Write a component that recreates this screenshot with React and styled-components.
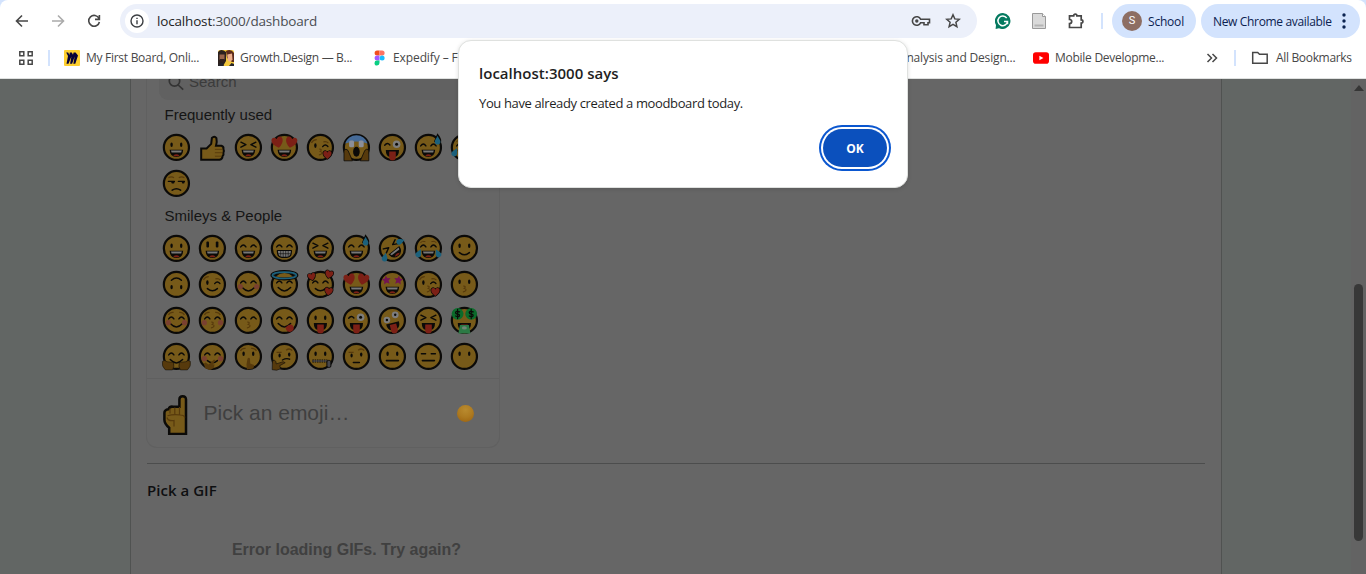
import React from "react";
import styled, { createGlobalStyle } from "styled-components";

const INK = "#0b0a08";
const SKIN = "#775a19";
const RED = "#7c2016";
const BLUE = "#1c617c";
const BROWN = "#573a0c";

const GlobalStyle = createGlobalStyle`
  * { box-sizing: border-box; }
  body { margin: 0; overflow: hidden; font-family: "Open Sans", "Noto Sans", sans-serif; }
`;

const Window = styled.div`
  position: relative;
  width: 1366px;
  height: 574px;
  display: flex;
  flex-direction: column;
  overflow: hidden;
  background: #d3e3fd;
`;

/* ---------- browser chrome ---------- */
const Chrome = styled.header`
  height: 79px;
  flex: none;
  background: #fff;
  border-radius: 8px 8px 0 0;
  border-bottom: 1px solid #dfe1e0;
`;
const Toolbar = styled.div`
  height: 42px;
  display: flex;
  align-items: center;
  padding-left: 13px;
`;
const NavButtons = styled.div`
  width: 107px;
  display: flex;
  gap: 18px;
  svg { display: block; }
`;
const Omnibox = styled.div`
  width: 857px;
  height: 34px;
  border-radius: 17px;
  background: #ecf0fa;
  display: flex;
  align-items: center;
  padding: 0 16px 0 5px;
`;
const SiteInfo = styled.div`
  width: 24px;
  height: 24px;
  border-radius: 50%;
  background: #fff;
  display: grid;
  place-items: center;
  margin-right: 8px;
`;
const Url = styled.div`
  flex: 1;
  font-size: 13.5px;
  letter-spacing: ${(p) => p.$spacing};
  color: #4a4d52;
  white-space: nowrap;
  b { font-weight: 400; color: #1f1f1f; }
`;
const OmniActions = styled.div`
  display: flex;
  align-items: center;
  gap: 14px;
`;
const Extensions = styled.div`
  display: flex;
  align-items: center;
  gap: 20px;
  margin-left: 18px;
`;
const Separator = styled.i`
  width: 2px;
  height: 16px;
  flex: none;
  background: #d3e3fd;
  margin: ${(p) => p.$margin};
`;
const Pill = styled.div`
  width: ${(p) => p.$width}px;
  height: 34px;
  border-radius: 17px;
  background: #d3e3fd;
  color: #0b2250;
  display: flex;
  align-items: center;
  padding-left: ${(p) => p.$pad}px;
  margin-right: 5px;
  font-size: 12px;
  letter-spacing: ${(p) => p.$spacing};
  white-space: nowrap;
`;
const Avatar = styled.span`
  width: 20px;
  height: 20px;
  border-radius: 50%;
  background: #8d6e63;
  color: #fff;
  font: 11px/20px Roboto, sans-serif;
  text-align: center;
  margin-right: 6px;
  letter-spacing: 0;
`;
const PillText = styled.span`
  width: ${(p) => p.$width}px;
`;
const Bookmarks = styled.nav`
  height: 32px;
  display: flex;
  align-items: center;
  padding-left: 18px;
`;
const Bookmark = styled.div`
  width: ${(p) => p.$width}px;
  margin-left: ${(p) => p.$left || 0}px;
  display: flex;
  align-items: center;
  gap: ${(p) => p.$gap || 6}px;
  color: #474747;
  font-size: 12px;
  line-height: 16px;
  letter-spacing: ${(p) => p.$spacing};
  white-space: nowrap;
  flex: none;
  svg { flex: none; display: block; }
`;

/* ---------- page ---------- */
const Page = styled.main`
  flex: 1;
  min-height: 0;
  display: flex;
  background: #626664;
  padding-left: 130px;
`;
const Card = styled.section`
  width: 1092px;
  border: solid #505251;
  border-width: 0 1px;
  background: #666;
  padding: 0 16px;
`;
const Picker = styled.div`
  width: 354px;
  height: 369px;
  margin-left: -1px;
  border: solid #606060;
  border-width: 0 1px 1px;
  border-radius: 0 0 11px 11px;
  font-family: "Liberation Sans", Arial, sans-serif;
  display: flex;
  flex-direction: column;
`;
const SearchBox = styled.div`
  height: 21px;
  margin: 0 12px;
  border-radius: 0 0 9px 9px;
  background: #616161;
  color: #3b3b3b;
  display: flex;
  align-items: flex-start;
  padding-left: 9px;
  gap: 5px;
  font-size: 15px;
  overflow: hidden;
  svg { margin-top: -5px; flex: none; }
  span { line-height: 18px; margin-top: -6px; }
`;
const Category = styled.h3`
  margin: 0;
  padding-left: 17.5px;
  height: ${(p) => p.$height}px;
  line-height: ${(p) => p.$height}px;
  font-size: 15px;
  font-weight: 400;
  color: #151515;
`;
const EmojiGrid = styled.div`
  display: grid;
  grid-template-columns: repeat(9, 36px);
  grid-auto-rows: 36px;
  padding-left: 11px;
`;
const EmojiCell = styled.div`
  display: grid;
  place-items: center;
  svg { display: block; overflow: visible; }
`;
const Preview = styled.footer`
  margin-top: auto;
  height: 69px;
  border-top: 1px solid #5f5f5f;
  display: flex;
  align-items: center;
  padding: 0 25px 0 15px;
`;
const PreviewText = styled.span`
  flex: 1;
  margin-left: 13.5px;
  font-size: 21px;
  color: #3f3f3f;
`;
const SkinTone = styled.span`
  width: 17px;
  height: 17px;
  border-radius: 50%;
  background: radial-gradient(circle at 50% 28%, #b98b2f, #ad7a20 50%, #9a5f0c 100%);
`;
const Rule = styled.hr`
  margin: 15px 0 0;
  border: 0;
  height: 1px;
  background: #4c4d4d;
`;
const Heading = styled.h2`
  margin: 15px 0 0;
  font-size: 15px;
  line-height: 22px;
  font-weight: 600;
  letter-spacing: 0.03px;
  color: #0e0f11;
`;
const ErrorText = styled.p`
  width: 399px;
  margin: 38px 0 0;
  text-align: center;
  font: 700 16px/22px "Liberation Sans", Arial, sans-serif;
  letter-spacing: -0.01px;
  color: #404040;
`;
const Scrollbar = styled.aside`
  width: 15px;
  margin-left: auto;
  background: #636363;
  display: flex;
  flex-direction: column;
  align-items: center;
  padding-top: 6px;
`;
const ScrollThumb = styled.div`
  width: 9px;
  height: 257px;
  margin-top: 193px;
  border-radius: 5px;
  background: #383838;
`;

/* ---------- alert ---------- */
const Alert = styled.div`
  position: absolute;
  left: 458px;
  top: 40px;
  width: 450px;
  height: 148px;
  border: 1px solid #dfe1df;
  border-radius: 13px;
  background: #fff;
  padding: 21px 20px 20px;
  display: flex;
  flex-direction: column;
  color: #1f1f1f;
  box-shadow: 0 1px 4px rgba(0, 0, 0, 0.13);
`;
const AlertTitle = styled.div`
  font-size: 15px;
  line-height: 22px;
  font-weight: 600;
  letter-spacing: 0.02px;
`;
const AlertMessage = styled.div`
  margin-top: 9px;
  font-size: 13px;
  line-height: 20px;
  letter-spacing: -0.37px;
`;
const OkButton = styled.button`
  align-self: flex-end;
  width: 64px;
  height: 38px;
  margin-top: auto;
  padding: 0;
  border: 0;
  border-radius: 19px;
  background: #0b50bd;
  box-shadow: 0 0 0 2px #fff, 0 0 0 4px #0b57d0;
  color: #fff;
  font: 700 12px "Open Sans", sans-serif;
`;

/* ---------- emoji drawing ---------- */
const line = { fill: "none", stroke: INK, strokeWidth: 1.4, strokeLinecap: "round", strokeLinejoin: "round" };
const HEART = "M0 3.8 C-5.6 0.3 -4.3 -4.4 -1.5 -3.6 Q-.3 -3.3 0 -2 Q.3 -3.3 1.5 -3.6 C4.3 -4.4 5.6 .3 0 3.8Z";
const STAR = "M0-4.5 1.3-1.5 4.5-1.2 2.1 1 2.8 4.2 0 2.5-2.8 4.2-2.1 1-4.5-1.2-1.3-1.5Z";

const Heart = ({ x, y, s = 1, r = 0, edge }) => (
  <path d={HEART} transform={`translate(${x} ${y}) rotate(${r}) scale(${s})`} fill={RED} stroke={edge ? INK : "none"} strokeWidth="1.4" paintOrder="stroke" />
);
const Drop = ({ x, y, r = 0 }) => (
  <path d="M0-4.5C1-2 2.8-.4 2.8 1.5a2.8 2.8 0 0 1-5.6 0C-2.8-.4-1-2 0-4.5Z" transform={`translate(${x} ${y}) rotate(${r})`} fill={BLUE} />
);

const eyes = {
  dots: <g fill={INK}><ellipse cx="9.2" cy="11.3" rx="1.2" ry="2.2" /><ellipse cx="18.8" cy="11.3" rx="1.2" ry="2.2" /></g>,
  tall: <g fill={INK}><rect x="8" y="7" width="2.6" height="6" rx="1" /><rect x="17.4" y="7" width="2.6" height="6" rx="1" /></g>,
  arcs: <path {...line} d="M6.3 12.5Q9 8.8 11.5 12.5M16.5 12.5Q19 8.8 21.7 12.5" />,
  squint: <path {...line} d="M6.5 8.8l5 2.4-5 2.6M21.5 8.8l-5 2.4 5 2.6" />,
  hearts: <g><Heart x={7.2} y={9} s={1.45} r={-14} /><Heart x={20.8} y={9} s={1.45} r={14} /></g>,
  stars: <g fill="#721552"><path d={STAR} transform="translate(7.9 9.5) rotate(-8)" /><path d={STAR} transform="translate(20.1 9.5) rotate(8)" /></g>,
  wink: <g><ellipse cx="9" cy="12.2" rx="1.2" ry="2.4" fill={INK} /><path {...line} d="M16.3 13.2q2.6-3 5.2-.2" /><path d="M5 9.5q2-3.3 5.4-3.2M17 8.5q3-.8 5 1.2" fill="none" stroke={BROWN} strokeWidth="1.2" /></g>,
  bigWink: <g><path {...line} d="M6.3 11.8Q9 8.5 11.5 11.6" /><circle cx="18.2" cy="10.8" r="3.8" fill="#7d7d7d" /><circle cx="18.2" cy="10.8" r="1.5" fill={INK} /></g>,
  zany: <g fill="#7d7d7d"><circle cx="8.5" cy="13.6" r="3.3" /><circle cx="16.8" cy="8.4" r="3.4" /><circle cx="8.5" cy="13.6" r="1.2" fill={INK} /><circle cx="16.8" cy="8.4" r="1.2" fill={INK} /></g>,
  scared: <g><path d="M2.7 10.2a11.8 11.8 0 0 1 22.6 0Q14 6 2.7 10.2Z" fill="#466b98" /><rect x="6.7" y="7.2" width="5" height="6.6" rx="1.5" fill="#8b8f9a" /><rect x="16.3" y="7.2" width="5" height="6.6" rx="1.5" fill="#8b8f9a" /></g>,
  shut: <path {...line} d="M7 11.4h4.2M16.8 11.4H21" />,
  side: <g><path {...line} d="M6 12h6M16 12h6" /><path {...line} strokeWidth="2.2" d="M10 13h1M20.5 13h.6" /><path d="M6 8.3q3-1.6 5.6 0M16.4 8.3q2.8-1.6 5.6 0" fill="none" stroke={BROWN} strokeWidth="1.3" /></g>,
  raised: <g><ellipse cx="9.2" cy="13" rx="1.1" ry="2" fill={INK} /><ellipse cx="18.8" cy="12.2" rx="1.2" ry="2.1" fill={INK} /><path d="M6.2 10h5M15.8 7.8q3.2-2.6 6 .3" fill="none" stroke={BROWN} strokeWidth="1.4" /></g>,
  money: <g><circle cx="7.2" cy="7.4" r="5.9" fill="#0b6b2b" /><circle cx="20.8" cy="7.4" r="5.9" fill="#0b6b2b" /><path {...line} strokeWidth="1.2" d="M9.2 5.5Q5.600 4.200 5.200 6 5 7.400 7.200 7.700 9.600 8 9 9.600 7.600 11 5.300 9.600M7.200 3v9.200M22.800 5.500q-3.400-1.400-4 .4 0 1.600 2 1.800 2.400.3 1.800 1.900-1.400 1.400-3.700 0M20.800 3v9.200" /></g>,
};

const mouths = {
  grin: <g><path d="M7.2 16.4h13.6q-.4 7.2-6.8 7.2t-6.8-7.2Z" fill={INK} /><path d="M8.6 17.2h10.8l-.6 1.9H9.2Z" fill="#777" /><path d="M10.8 22q3.2-2.4 6.4 0-3 1.7-6.4 0Z" fill={RED} /></g>,
  smile: <path {...line} strokeWidth="1.5" d="M9 18.2q5 4.3 10 0" />,
  wide: <path {...line} strokeWidth="1.5" d="M7.8 17.2q6.2 6.6 12.4 0" />,
  teeth: <g><path d="M6.5 15.5h15q.7 7.8-5 8h-5q-5.7-.2-5-8Z" fill={INK} /><path d="M7.6 16.6h12.8q.3 5.6-4 5.8h-4.8q-4.2-.2-4-5.8Z" fill="#777" /><path d="M7.8 19.3h12.4M10.3 16.5v5M12.8 16.5v6M15.3 16.5v6M17.8 16.5v5" stroke={INK} strokeWidth=".6" /></g>,
  kiss: <path d="M12.8 15.6q3.6.2 1 2.5 3.6.9.2 3.100-1.800.8-.6-.1" fill="none" stroke={BROWN} strokeWidth="1.1" />,
  tongue: <g><path d="M7.4 16.5h13.2q0 6-4 7h-5.200q-4-1-4-7Z" fill={INK} /><path d="M10.800 18h6.600v6.200q-.2 3-3.300 3t-3.300-3Z" fill={RED} /></g>,
  flat: <path {...line} strokeWidth="1.6" d="M8 18.2h12" />,
  small: <path {...line} strokeWidth="1.5" d="M11 20.2h6" />,
  frown: <path {...line} strokeWidth="1.5" d="M9.8 20.800q4.200-3 8.400 0" />,
  scream: <ellipse cx="14" cy="18.3" rx="3.300" ry="5" fill={INK} />,
  zip: <g><path d="M6 18.600h15" stroke={INK} strokeWidth="3" strokeDasharray="1.5 .8" /><path d="M6 18.600h16" stroke="#4a4a50" strokeWidth="1.300" /><rect x="20.500" y="18" width="4" height="7" rx="1.500" fill="#47474d" stroke={INK} /></g>,
  none: null,
};
const extras = {
  kissHeart: <Heart x={21} y={21.5} s={1.05} edge />,
  sweat: <g><path d="M23-.2q4.200 5 3.800 8.400-3.800 4.300-7.200 0Z" fill={INK} /><Drop x={23.2} y={6.800} /></g>,
  tears: <g><Drop x={4.600} y={18.800} r={28} /><Drop x={23.400} y={18.800} r={-28} /><path d="M6 8.200q2-2 5-1M17 7.200q3-1 5 1" fill="none" stroke={BROWN} /></g>,
  blush: <g fill="#7a4030"><circle cx="5.900" cy="16.300" r="2.600" /><circle cx="22.100" cy="16.300" r="2.600" /></g>,
  brows: <path d="M6 8.500q1.600-3 5.200-2.500M16.800 6q3.600-.500 5.200 2.500" fill="none" stroke={BROWN} strokeWidth="1.300" />,
  halo: <g fill="none"><ellipse cx="14" cy="4.900" rx="12.500" ry="3.700" stroke={INK} strokeWidth="3" /><ellipse cx="14" cy="4.900" rx="12" ry="3.200" stroke={BLUE} strokeWidth="1.700" /></g>,
  loveHearts: <g><Heart x={5.400} y={6.400} s={0.95} r={-15} edge /><Heart x={22.700} y={4} s={1} r={14} edge /><Heart x={22.300} y={21} s={1} r={8} edge /></g>,
  lick: <path d="M15 21q4-4 7-2.500 3 3.600-.5 6.300-3 1.800-5.500-1Z" fill={RED} />,
  hug: <path d="M0 19q2.500-2 4.500.3l6.500.7q1.500 4-1 7.500H3q-4-3.500-3-8.500ZM28 19q-2.500-2-4.500.3L17 20q-1.500 4 1 7.500h7q4-3.500 3-8.500Z" fill={BROWN} stroke={INK} strokeWidth=".5" />,
  giggle: <path d="M7 26 5.200 21.400l2-1.200 3 2 5.500-5 1.300 1-2.800 3.600 2 .4-1 3.600-3.700 1.700Z" fill={BROWN} />,
  hush: <path d="M12.500 27l-.4-5 1-5.700q1.500-2 2.500 0l.2 4.700 3.900 1.500-.7 3.500Z" fill={BROWN} />,
  think: <g><path d="M2 19.300q2-3 3.600.2l.2 2 7-2.200 2 1-5.500 3 1 3-4 1.500-4.500-.5Z" fill={BROWN} stroke={INK} strokeWidth=".6" /><path {...line} d="M12 17.600q4-2.200 7.200-.8" /></g>,
  hands: <g><path d="M1.600 27.400V17q2-2.500 4 0l4.500 10.400ZM26.400 27.400V17q-2-2.500-4 0l-4.500 10.400Z" fill={BROWN} stroke={INK} strokeWidth=".8" /></g>,
  cash: <g><path d="M9.500 18.500h9l1.500 8.500H8Z" fill="#2c7a45" /><ellipse cx="14" cy="21.500" rx="2.500" ry="1.600" fill="#6f8575" /></g>,
  roflTears: <g><Drop x={6.500} y={17} r={10} /><Drop x={21.600} y={17} r={-10} /></g>,
};

const face = (eye, mouth, ...more) => ({ eye, mouth, more });
const frequent = [
  face("dots", "grin"), "thumb", face("squint", "grin"), face("hearts", "grin"), face("wink", "kiss", "kissHeart"),
  face("scared", "scream", "hands"), face("bigWink", "tongue"), face("arcs", "grin", "sweat"), face("arcs", "grin", "tears"),
  face("side", "frown"),
];
const smileys = [
  face("dots", "grin"), face("tall", "grin"), face("arcs", "grin"), face("arcs", "teeth"), face("squint", "grin"),
  face("arcs", "grin", "sweat"), { ...face("squint", "grin"), rofl: true, tilt: -38 }, face("arcs", "grin", "tears"), face("dots", "smile"),
  { ...face("dots", "smile"), flipped: true }, face("wink", "smile"), face("arcs", "wide", "blush"), face("arcs", "wide", "halo"), face("arcs", "smile", "loveHearts"),
  face("hearts", "grin"), face("stars", "grin"), face("wink", "kiss", "kissHeart"), face("dots", "kiss"),
  face("arcs", "wide", "blush", "brows"), face("arcs", "kiss", "blush", "brows"), face("arcs", "kiss"), face("arcs", "wide", "lick"), face("dots", "tongue"),
  face("bigWink", "tongue"), { ...face("zany", "tongue"), mouthTilt: -14 }, face("squint", "tongue"), face("money", "tongue", "cash"),
  face("arcs", "wide", "hug"), face("arcs", "smile", "blush", "giggle"), face("dots", "none", "brows", "hush"), face("raised", "none", "think"), face("dots", "zip"),
  face("raised", "small"), face("dots", "flat"), face("shut", "flat"), face("dots", "none"),
];

function Emoji({ item }) {
  return (
    <EmojiCell>
      <svg width="28" height="28" viewBox="-.4 -.4 28 28">
        {item === "thumb" ? (
          <g>
            <path d="M2.800 26.400V15h5.400l4.600-4.500.700-6q2.500-2.600 4.500.2.800 3.300-.4 7.700h5.400q2.600.8 2 3.200 1 2 0 3.700.6 2-.9 3.600 0 2.900-3 3.500Z" fill={SKIN} stroke={INK} strokeWidth="2" />
            <path d="M16.500 16h7.500M16.500 19.300h7.500M16.500 22.800h6.500" stroke={BROWN} strokeWidth=".9" />
          </g>
        ) : (
          <g>
            <circle cx="14" cy="14" r="12.550" fill={SKIN} stroke={INK} strokeWidth="2.200" />
            <g transform={item.flipped ? "matrix(1 0 0 -1 0 28)" : `rotate(${item.tilt || 0} 14 14)`}>
              {eyes[item.eye]}
              <g transform={`rotate(${item.mouthTilt || 0} 14 16)`}>{mouths[item.mouth]}</g>
            </g>
            {item.rofl && <g><Drop x={6.500} y={22.800} r={12} /><Drop x={22.200} y={7} r={70} /></g>}
            {item.more.map((name) => <g key={name}>{extras[name]}</g>)}
          </g>
        )}
      </svg>
    </EmojiCell>
  );
}

const stroke = { fill: "none", stroke: "#474747", strokeWidth: 1.6 };

function BrowserChrome() {
  return (
    <Chrome>
      <Toolbar>
        <NavButtons>
          <svg width="18" height="18" viewBox="0 0 18 18" {...stroke}><path d="M15 9H4M9 3.500 3.500 9 9 14.500" /></svg>
          <svg width="18" height="18" viewBox="0 0 18 18" {...stroke} stroke="#ababab"><path d="M3 9h11M9 3.500 14.500 9 9 14.500" /></svg>
          <svg width="18" height="18" viewBox="0 0 18 18" {...stroke}><path d="M14 6.500A5.400 5.400 0 1 0 14.400 10M14.400 3v4.400H10" /></svg>
        </NavButtons>
        <Omnibox>
          <SiteInfo>
            <svg width="14" height="14" viewBox="0 0 14 14" fill="none" stroke="#3c3f43" strokeWidth="1.400"><circle cx="7" cy="7" r="6" /><path d="M7 6.200v4M7 3.700v1.400" /></svg>
          </SiteInfo>
          <Url $spacing="-0.17px"><b>localhost</b>:3000/dashboard</Url>
          <OmniActions>
            <svg width="20" height="14" viewBox="0 0 20 14" {...stroke} strokeWidth="1.600"><path d="M9.600 5.200A4.300 4.300 0 1 0 9.600 8.800H13v2h4v-2h1.500V5.200Z" /><circle cx="5.800" cy="7" r="1.700" fill="#474747" stroke="none" /></svg>
            <svg width="16" height="16" viewBox="0 0 16 16" {...stroke} strokeWidth="1.500"><path d="m8 1.800 1.800 4.100 4.500.4-3.400 3 1 4.400L8 11.400l-3.900 2.300 1-4.400-3.400-3 4.500-.4Z" /></svg>
          </OmniActions>
        </Omnibox>
        <Extensions>
          <svg width="16" height="16" viewBox="0 0 16 16"><path d="M8 0a8 8 0 1 1-4 15.200L.6 16l.4-4A8 8 0 0 1 8 0Z" fill="#057a60" /><path d="M11.700 5.100A4.800 4.800 0 1 0 12.500 8.500H9M12.500 8.300v3" fill="none" stroke="#fff" strokeWidth="1.500" /></svg>
          <svg width="16" height="16" viewBox="0 0 16 16"><path d="M1.500.5h10l3 3v12h-13Z" fill="#dadada" stroke="#9a9a9a" /><path d="M11.500.5v3h3" fill="#fff" stroke="#9a9a9a" /><path d="M3.500 11.500h9v2h-9Z" fill="#b4b4b4" /></svg>
          <svg width="18" height="18" viewBox="0 0 18 18" {...stroke} strokeWidth="1.700"><path d="M2.500 3.800h4.200q0-1.700 1.600-1.700t1.600 1.700h4.300v4q1.700 0 1.700 1.600t-1.700 1.600v4.500H2.500v-4q2.200 0 2.200-2t-2.200-2Z" /></svg>
        </Extensions>
        <Separator $margin="0 9px 0 16px" />
        <Pill $width={84} $pad={10} $spacing="-0.2px"><Avatar>S</Avatar>School</Pill>
        <Pill $width={159} $pad={12} $spacing="-0.34px">
          <PillText $width={129}>New Chrome available</PillText>
          <svg width="4" height="16" viewBox="0 0 4 16" fill="#0b2250"><circle cx="2" cy="2" r="1.700" /><circle cx="2" cy="8" r="1.700" /><circle cx="2" cy="14" r="1.700" /></svg>
        </Pill>
      </Toolbar>
      <Bookmarks>
        <svg width="16" height="16" viewBox="0 0 16 16" {...stroke} strokeWidth="1.500"><path d="M1.800 1.800h4v4h-4ZM10.200 1.800h4v4h-4ZM1.800 10.200h4v4h-4ZM10.200 10.200h4v4h-4Z" /></svg>
        <Separator $margin="0 14px" />
        <Bookmark $width={154} $spacing="-0.28px">
          <svg width="16" height="16" viewBox="0 0 16 16"><rect width="16" height="16" rx="1" fill="#ffd02f" /><path d="M2.200 2.500h2l1.200 2.600L5.800 2.500h2l1.200 2.300.6-2.300h2L14 5.600l-2.700 8.100H9.300l1.400-7.200-2.600 7.200H6.100L7.400 6.500 4.500 13.700h-2L4 6Z" fill="#050038" /></svg>
          My First Board, Onli...
        </Bookmark>
        <Bookmark $width={155} $spacing="-0.32px">
          <svg width="16" height="16" viewBox="0 0 16 16"><rect width="16" height="16" rx="2" fill="#f3c83e" /><path d="M0 2q3-4 8 0v9L5 16H0Z" fill="#2c211e" /><path d="M1.500 4.500h5v5q-2.500 2.500-5 0Z" fill="#9a654b" /><path d="M2 9h4.500v3q-2.500 1-4.500-1Z" fill="#33221c" /><path d="M8 1q5-2.500 8 2v9h-2L9 8Z" fill="#5c2b1c" /><path d="M9.300 4.500l4.700-1 .5 6q-2.500 4-4.800.5Z" fill="#efb08c" /><path d="M0 16q1-3 4-3l2 3ZM11 16l2.500-3 2.500 1v2Z" fill="#26252b" /></svg>
          Growth.Design — B...
        </Bookmark>
        <Bookmark $width={84} $gap={7} $spacing="-0.1px">
          <svg width="13" height="16" viewBox="-1.500 0 13 16"><path d="M5 .5H2.600a2.500 2.500 0 0 0 0 5H5Z" fill="#f24e1e" /><path d="M5 .5h2.600a2.500 2.500 0 0 1 0 5H5Z" fill="#ff7262" /><path d="M5 5.500H2.600a2.500 2.500 0 0 0 0 5H5Z" fill="#a259ff" /><circle cx="7.600" cy="8" r="2.500" fill="#1abcfe" /><path d="M5 10.500H2.600a2.500 2.500 0 1 0 2.400 2.500Z" fill="#0acf83" /></svg>
          Expedify – F
        </Bookmark>
        <Bookmark $left={442} $width={134} $spacing="-0.17px">Analysis and Design...</Bookmark>
        <Bookmark $width={172} $spacing="-0.27px">
          <svg width="16" height="16" viewBox="0 0 16 16"><rect y="2.300" width="16" height="11.400" rx="2.800" fill="#f00" /><path d="m6.400 5.800 4 2.200-4 2.200Z" fill="#fff" /></svg>
          Mobile Developme...
        </Bookmark>
        <svg width="14" height="14" viewBox="0 0 14 14" {...stroke} strokeWidth="1.500"><path d="m2.500 3 4 4-4 4M7.500 3l4 4-4 4" /></svg>
        <Separator $margin="0 15px" />
        <Bookmark $width={106} $gap={7} $spacing="-0.33px">
          <svg width="18" height="14" viewBox="0 0 18 14" {...stroke} strokeWidth="1.500"><path d="M1.700 1.500h5l1.800 1.800h7.700v9H1.700Z" /></svg>
          All Bookmarks
        </Bookmark>
      </Bookmarks>
    </Chrome>
  );
}

export default function App() {
  return (
    <Window>
      <GlobalStyle />
      <BrowserChrome />
      <Page>
        <Card>
          <Picker>
            <SearchBox>
              <svg width="16" height="17" viewBox="0 0 16 17" fill="none" stroke="#343434" strokeWidth="1.700"><circle cx="6.500" cy="7" r="5.200" /><path d="m10.200 11 5 4.700" /></svg>
              <span>Search</span>
            </SearchBox>
            <Category $height={29}>Frequently used</Category>
            <EmojiGrid>{frequent.map((item, i) => <Emoji key={i} item={item} />)}</EmojiGrid>
            <Category $height={29}>Smileys &amp; People</Category>
            <EmojiGrid>{smileys.map((item, i) => <Emoji key={i} item={item} />)}</EmojiGrid>
            <Preview>
              <svg width="28" height="44" viewBox="0 0 28 44">
                <path d="M7.200 43V36.800Q2.400 33 2.400 28.800V22Q2.400 18.800 6.500 18.200 8 15 11 15.800H17.400V8.500Q17.400 5.200 20.700 5.200T24 8.500V43Z" fill={SKIN} stroke={INK} strokeWidth="2.500" />
                <path d="M8 17.500v5M12.800 16.500v6.500M17.500 16v8M5.500 24.800q6-2 13-.8 3.500 0 4.500 2.500M5 26.500q1 4 7 3v6" fill="none" stroke={BROWN} strokeWidth="1.200" />
              </svg>
              <PreviewText>Pick an emoji…</PreviewText>
              <SkinTone />
            </Preview>
          </Picker>
          <Rule />
          <Heading>Pick a GIF</Heading>
          <ErrorText>Error loading GIFs. Try again?</ErrorText>
        </Card>
        <Scrollbar>
          <svg width="10" height="6" viewBox="0 0 10 6"><path d="M0 6 5 0l5 6Z" fill="#363636" /></svg>
          <ScrollThumb />
        </Scrollbar>
      </Page>
      <Alert role="alertdialog">
        <AlertTitle>localhost:3000 says</AlertTitle>
        <AlertMessage>You have already created a moodboard today.</AlertMessage>
        <OkButton>OK</OkButton>
      </Alert>
    </Window>
  );
}
